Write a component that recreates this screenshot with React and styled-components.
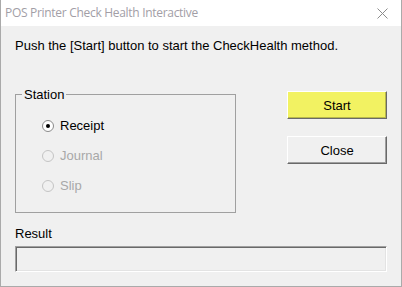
import React from 'react';
import styled, { createGlobalStyle } from 'styled-components';

const GlobalStyle = createGlobalStyle`
  html, body {
    margin: 0;
    padding: 0;
    background: #f0f0f0;
  }
  * {
    box-sizing: border-box;
  }
`;

const Window = styled.div`
  width: 402px;
  height: 287px;
  border: 1px solid #aaaaaa;
  border-top: none;
  background: #f0f0f0;
  display: flex;
  flex-direction: column;
  font-family: 'Liberation Sans', Arial, sans-serif;
  font-size: 13px;
  line-height: 15px;
  color: #000;
`;

const TitleBar = styled.div`
  height: 26px;
  flex: none;
  background: #fff;
  display: flex;
  align-items: center;
  justify-content: space-between;
  padding-left: 4px;
`;

const Title = styled.span`
  font-family: 'Open Sans', 'Noto Sans', sans-serif;
  font-size: 12px;
  color: #a29ea6;
  letter-spacing: -0.3px;
  padding-bottom: 1px;
`;

const CloseBox = styled.div`
  width: 34px;
  height: 26px;
  display: flex;
  align-items: center;
  justify-content: center;
  padding-right: 4px;
`;

const Client = styled.div`
  flex: 1;
  display: flex;
  flex-direction: column;
  padding: 12px 14px 0 14px;
`;

const Prompt = styled.p`
  margin: 0 0 34px 0;
`;

const MainRow = styled.div`
  display: flex;
  justify-content: space-between;
  align-items: flex-start;
`;

const Station = styled.fieldset`
  width: 221px;
  height: 126px;
  margin: 0;
  padding: 8px 0 0 0;
  border: 1px solid #a0a0a0;
  border-radius: 0;
  min-width: 0;
`;

const Legend = styled.legend`
  margin-left: 6px;
  padding: 0 2px;
  line-height: 15px;
`;

const OptionList = styled.div`
  display: flex;
  flex-direction: column;
  padding-left: 26px;
`;

const Option = styled.label`
  height: 30px;
  display: flex;
  align-items: center;
  gap: 6px;
  color: ${(p) => (p.disabled ? '#a8a8a8' : '#000')};
`;

const RadioDot = styled.span`
  width: 12px;
  height: 12px;
  border-radius: 50%;
  border: 1px solid ${(p) => (p.disabled ? '#c4c4c4' : '#8a8a8a')};
  background: ${(p) => (p.disabled ? '#f0f0f0' : '#fff')};
  display: flex;
  align-items: center;
  justify-content: center;
  margin-top: 1px;

  &::after {
    content: '';
    width: 4px;
    height: 4px;
    border-radius: 50%;
    background: ${(p) => (p.checked ? '#000' : 'transparent')};
  }
`;

const Buttons = styled.div`
  display: flex;
  flex-direction: column;
  gap: 17px;
  padding-top: 4px;
`;

const Button = styled.button`
  width: 100px;
  height: 28px;
  margin: 0;
  padding: 0;
  font-family: inherit;
  font-size: 13px;
  color: #000;
  background: ${(p) => (p.$yellow ? '#f2f262' : '#f0f0f0')};
  border: 1px solid;
  border-color: #fff #696969 #696969 #fff;
  box-shadow: inset -1px -1px 0 ${(p) => (p.$yellow ? '#b8b84a' : '#a0a0a0')};
  border-radius: 0;
`;

const ResultLabel = styled.div`
  margin-top: 13px;
`;

const ResultBox = styled.div`
  margin-top: 5px;
  height: 26px;
  width: 372px;
  border: 1px solid;
  border-color: #a0a0a0 #fff #fff #a0a0a0;
  box-shadow: inset 1px 1px 0 #696969, inset -1px -1px 0 #e3e3e3;
  background: #f0f0f0;
`;

const stations = [
  { name: 'Receipt', checked: true, disabled: false },
  { name: 'Journal', checked: false, disabled: true },
  { name: 'Slip', checked: false, disabled: true },
];

export default function App() {
  return (
    <>
      <GlobalStyle />
      <Window>
        <TitleBar>
          <Title>POS Printer Check Health Interactive</Title>
          <CloseBox>
            <svg width="11" height="11" viewBox="0 0 11 11">
              <path d="M0.5 0.5 L10.5 10.5 M10.5 0.5 L0.5 10.5" stroke="#8c8c8c" strokeWidth="1" fill="none" />
            </svg>
          </CloseBox>
        </TitleBar>
        <Client>
          <Prompt>Push the [Start] button to start the CheckHealth method.</Prompt>
          <MainRow>
            <Station>
              <Legend>Station</Legend>
              <OptionList>
                {stations.map((s) => (
                  <Option key={s.name} disabled={s.disabled}>
                    <RadioDot checked={s.checked} disabled={s.disabled} />
                    {s.name}
                  </Option>
                ))}
              </OptionList>
            </Station>
            <Buttons>
              <Button $yellow>Start</Button>
              <Button>Close</Button>
            </Buttons>
          </MainRow>
          <ResultLabel>Result</ResultLabel>
          <ResultBox />
        </Client>
      </Window>
    </>
  );
}
